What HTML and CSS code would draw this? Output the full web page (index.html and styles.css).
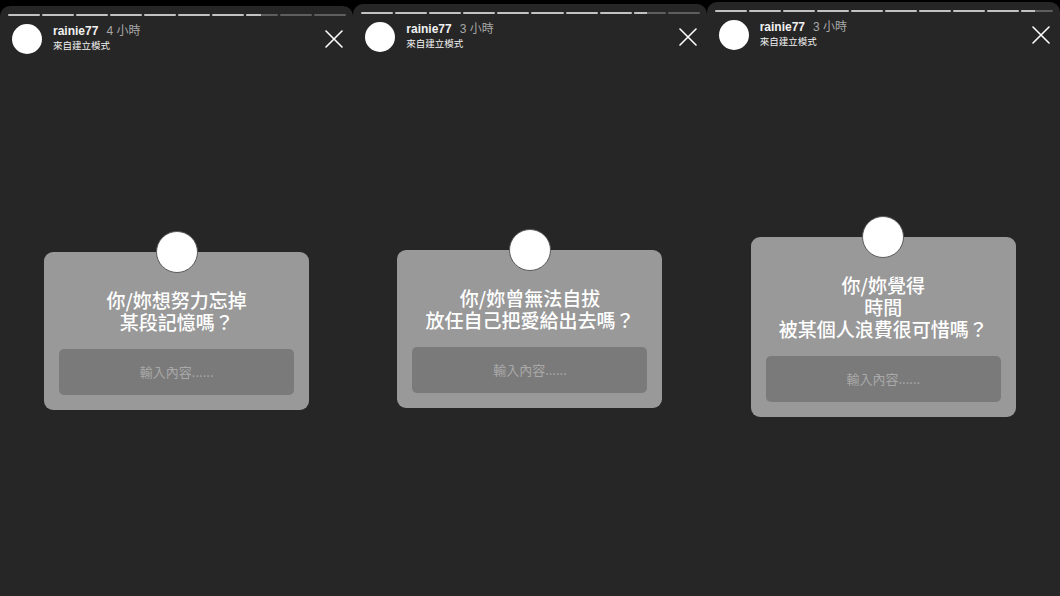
FILE: index.html
```html
<!DOCTYPE html>
<html lang="zh-Hant">
<head>
    <meta charset="UTF-8">
    <meta name="viewport" content="width=device-width, initial-scale=1.0">
    <title>rainie77 - 限時動態</title>
    <link rel="stylesheet" href="styles.css">
</head>
<body>
    <div class="stories">
        <!-- Story 1 -->
        <div class="story story-1">
            <div class="progress">
                <span class="seg"><i style="width:100%"></i></span>
                <span class="seg"><i style="width:100%"></i></span>
                <span class="seg"><i style="width:100%"></i></span>
                <span class="seg"><i style="width:100%"></i></span>
                <span class="seg"><i style="width:100%"></i></span>
                <span class="seg"><i style="width:100%"></i></span>
                <span class="seg"><i style="width:100%"></i></span>
                <span class="seg"><i style="width:45%"></i></span>
                <span class="seg"></span>
                <span class="seg"></span>
            </div>
            <div class="story-header">
                <div class="avatar"></div>
                <div class="user-info">
                    <div class="user-line"><span class="username">rainie77</span><span class="time">4 小時</span></div>
                    <div class="source">來自建立模式</div>
                </div>
                <svg class="close" viewBox="0 0 18 18" width="18" height="18">
                    <path d="M1 1 L17 17 M17 1 L1 17" stroke="#fff" stroke-width="1.6" stroke-linecap="round" fill="none"/>
                </svg>
            </div>
            <div class="stage">
                <div class="question-card">
                    <div class="card-avatar"></div>
                    <div class="question">你/妳想努力忘掉<br>某段記憶嗎？</div>
                    <div class="answer">輸入內容......</div>
                </div>
            </div>
        </div>

        <!-- Story 2 -->
        <div class="story story-2">
            <div class="progress">
                <span class="seg"><i style="width:100%"></i></span>
                <span class="seg"><i style="width:100%"></i></span>
                <span class="seg"><i style="width:100%"></i></span>
                <span class="seg"><i style="width:100%"></i></span>
                <span class="seg"><i style="width:100%"></i></span>
                <span class="seg"><i style="width:100%"></i></span>
                <span class="seg"><i style="width:100%"></i></span>
                <span class="seg"><i style="width:100%"></i></span>
                <span class="seg"><i style="width:42%"></i></span>
                <span class="seg"></span>
            </div>
            <div class="story-header">
                <div class="avatar"></div>
                <div class="user-info">
                    <div class="user-line"><span class="username">rainie77</span><span class="time">3 小時</span></div>
                    <div class="source">來自建立模式</div>
                </div>
                <svg class="close" viewBox="0 0 18 18" width="18" height="18">
                    <path d="M1 1 L17 17 M17 1 L1 17" stroke="#fff" stroke-width="1.6" stroke-linecap="round" fill="none"/>
                </svg>
            </div>
            <div class="stage">
                <div class="question-card">
                    <div class="card-avatar"></div>
                    <div class="question">你/妳曾無法自拔<br>放任自己把愛給出去嗎？</div>
                    <div class="answer">輸入內容......</div>
                </div>
            </div>
        </div>

        <!-- Story 3 -->
        <div class="story story-3">
            <div class="progress">
                <span class="seg"><i style="width:100%"></i></span>
                <span class="seg"><i style="width:100%"></i></span>
                <span class="seg"><i style="width:100%"></i></span>
                <span class="seg"><i style="width:100%"></i></span>
                <span class="seg"><i style="width:100%"></i></span>
                <span class="seg"><i style="width:100%"></i></span>
                <span class="seg"><i style="width:100%"></i></span>
                <span class="seg"><i style="width:100%"></i></span>
                <span class="seg"><i style="width:100%"></i></span>
                <span class="seg"><i style="width:44%"></i></span>
            </div>
            <div class="story-header">
                <div class="avatar"></div>
                <div class="user-info">
                    <div class="user-line"><span class="username">rainie77</span><span class="time">3 小時</span></div>
                    <div class="source">來自建立模式</div>
                </div>
                <svg class="close" viewBox="0 0 18 18" width="18" height="18">
                    <path d="M1 1 L17 17 M17 1 L1 17" stroke="#fff" stroke-width="1.6" stroke-linecap="round" fill="none"/>
                </svg>
            </div>
            <div class="stage">
                <div class="question-card">
                    <div class="card-avatar"></div>
                    <div class="question">你/妳覺得<br>時間<br>被某個人浪費很可惜嗎？</div>
                    <div class="answer">輸入內容......</div>
                </div>
            </div>
        </div>
    </div>
</body>
</html>
```

FILE: styles.css
```css
* {
    margin: 0;
    padding: 0;
    box-sizing: border-box;
}

body {
    background-color: #000;
    font-family: "Liberation Sans", "Noto Sans CJK TC", sans-serif;
    color: #fff;
    overflow: hidden;
    height: 596px;
}

.stories {
    display: flex;
    height: 596px;
}

.story {
    flex: 1;
    background-color: #262626;
    border-radius: 10px 10px 0 0;
    height: 620px;
    overflow: hidden;
}

.story-1 {
    margin-top: 6px;
}

.story-2 {
    margin-top: 4px;
}

.story-3 {
    margin-top: 2px;
}

/* Progress bar */
.progress {
    display: flex;
    gap: 2px;
    padding: 8px 7px 0 8px;
}

.seg {
    flex: 1;
    height: 2px;
    background-color: #5e5e5e;
    border-radius: 1px;
    overflow: hidden;
}

.seg i {
    display: block;
    height: 100%;
    background-color: #c2c2c2;
}

/* Header */
.story-header {
    display: flex;
    align-items: center;
    padding: 8px 10px 0 12px;
}

.avatar {
    width: 30px;
    height: 30px;
    border-radius: 50%;
    background-color: #fff;
    flex-shrink: 0;
}

.user-info {
    flex: 1;
    margin-left: 11px;
    margin-top: -1px;
}

.user-line {
    font-size: 12px;
    line-height: 15px;
}

.username {
    font-weight: bold;
    color: #f2f2f2;
}

.time {
    color: #a8a8a8;
    margin-left: 8px;
}

.source {
    font-size: 9.5px;
    line-height: 14px;
    color: #f2f2f2;
}

.close {
    display: block;
}

/* Question sticker */
.stage {
    height: 554px;
    display: flex;
    align-items: center;
    justify-content: center;
}

.question-card {
    position: relative;
    width: 265px;
    background-color: #999;
    border-radius: 9px;
    padding: 37px 15px 15px;
    text-align: center;
}

.card-avatar {
    position: absolute;
    top: -21px;
    left: 50%;
    margin-left: -21px;
    width: 42px;
    height: 42px;
    border-radius: 50%;
    background-color: #fff;
    border: 1px solid #5a5a5a;
}

.question {
    font-family: "Noto Sans CJK TC", sans-serif;
    font-size: 19px;
    font-weight: 500;
    line-height: 22px;
    color: #fff;
}

.answer {
    margin-top: 16px;
    height: 46px;
    line-height: 46px;
    background-color: #7a7a7a;
    border-radius: 5px;
    font-family: "Noto Sans CJK TC", sans-serif;
    font-size: 13px;
    color: #a9a9a9;
}
```
